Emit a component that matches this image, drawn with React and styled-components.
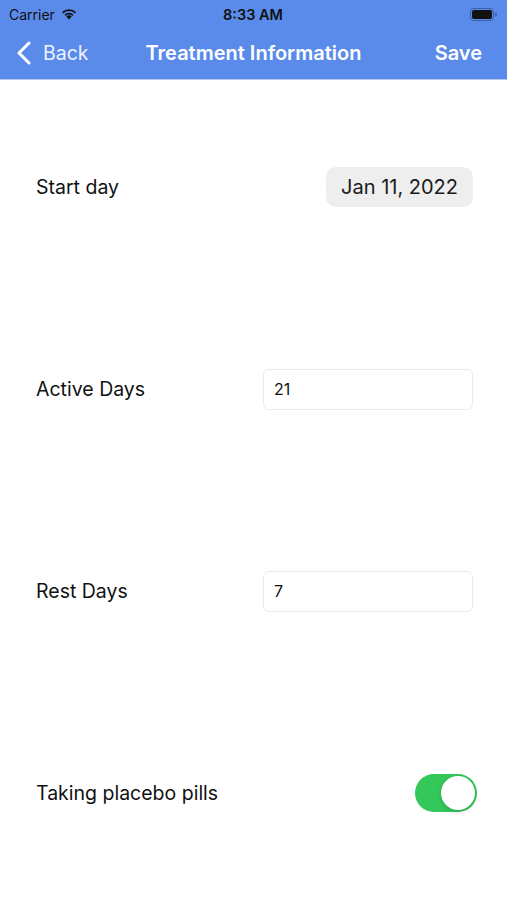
import React from "react";
import styled, { createGlobalStyle } from "styled-components";

const GlobalStyle = createGlobalStyle`
  html, body {
    margin: 0;
    padding: 0;
    background: #ffffff;
    font-family: "Inter", "Liberation Sans", Arial, sans-serif;
  }
`;

const rows = [
  { label: "Start day", kind: "date", value: "Jan 11, 2022" },
  { label: "Active Days", kind: "input", value: "21" },
  { label: "Rest Days", kind: "input", value: "7" },
  { label: "Taking placebo pills", kind: "toggle", value: true },
];

export default function App() {
  return (
    <Page>
      <GlobalStyle />
      <Header>
        <StatusBar>
          <Carrier>
            Carrier
            <svg width="18" height="13" viewBox="0 0 18 13">
              <path
                d="M9 12.5 L6.3 9.6 A3.9 3.9 0 0 1 11.7 9.6 Z"
                fill="#111"
              />
              <path
                d="M4.5 7.7 A6.4 6.4 0 0 1 13.5 7.7 L12.3 8.9 A4.7 4.7 0 0 0 5.7 8.9 Z"
                fill="#111"
              />
              <path
                d="M2 5.1 A10 10 0 0 1 16 5.1 L14.8 6.4 A8.2 8.2 0 0 0 3.2 6.4 Z"
                fill="#111"
              />
            </svg>
          </Carrier>
          <Time>8:33 AM</Time>
          <Battery>
            <svg width="27" height="13" viewBox="0 0 27 13">
              <rect x="0.5" y="0.5" width="23" height="12" rx="3.5" fill="none" stroke="#1f2d4a" strokeOpacity="0.45" />
              <rect x="2" y="2" width="20" height="9" rx="2" fill="#111" />
              <path d="M25 4.5 a1.6 1.6 0 0 1 0 4 Z" fill="#1f2d4a" fillOpacity="0.45" />
            </svg>
          </Battery>
        </StatusBar>
        <NavBar>
          <BackButton>
            <svg width="16" height="24" viewBox="0 0 16 24">
              <path
                d="M13 2 L3 12 L13 22"
                fill="none"
                stroke="#ffffff"
                strokeWidth="3"
                strokeLinecap="round"
                strokeLinejoin="round"
              />
            </svg>
            <span>Back</span>
          </BackButton>
          <Title>Treatment Information</Title>
          <SaveButton>Save</SaveButton>
        </NavBar>
      </Header>
      <Content>
        {rows.map((r) => (
          <Row key={r.label}>
            <Label>{r.label}</Label>
            {r.kind === "date" && <DatePill>{r.value}</DatePill>}
            {r.kind === "input" && <NumberInput defaultValue={r.value} />}
            {r.kind === "toggle" && (
              <Toggle $on={r.value}>
                <Knob />
              </Toggle>
            )}
          </Row>
        ))}
      </Content>
    </Page>
  );
}

const Page = styled.div`
  width: 507px;
  height: 900px;
  background: #ffffff;
  display: flex;
  flex-direction: column;
`;

const Header = styled.div`
  background: #5a8bea;
  height: 79px;
  display: flex;
  flex-direction: column;
  border-bottom: 1px solid #b9c8e3;
`;

const StatusBar = styled.div`
  height: 28px;
  display: grid;
  grid-template-columns: 1fr auto 1fr;
  align-items: center;
  padding: 0 10px 0 9px;
  color: #111;
`;

const Carrier = styled.div`
  display: flex;
  align-items: center;
  gap: 5px;
  font-size: 14px;
  font-family: "Inter", "Liberation Sans", sans-serif;
  svg {
    margin-top: -2px;
  }
`;

const Time = styled.div`
  font-size: 14.5px;
  font-weight: 600;
`;

const Battery = styled.div`
  display: flex;
  justify-content: flex-end;
`;

const NavBar = styled.div`
  flex: 1;
  display: flex;
  align-items: center;
  justify-content: space-between;
  padding: 0 25px 2px 16px;
  color: #ffffff;
  position: relative;
`;

const BackButton = styled.div`
  display: flex;
  align-items: center;
  gap: 11px;
  font-size: 19.5px;
  color: #eef3fd;
`;

const Title = styled.div`
  position: absolute;
  left: 0;
  right: 0;
  text-align: center;
  font-size: 20px;
  font-weight: 600;
  pointer-events: none;
  padding-bottom: 0;
`;

const SaveButton = styled.div`
  font-size: 20px;
  font-weight: 600;
`;

const Content = styled.div`
  display: flex;
  flex-direction: column;
  padding: 6px 34px 0 36px;
`;

const Row = styled.div`
  height: 202px;
  display: flex;
  align-items: center;
  justify-content: space-between;
`;

const Label = styled.div`
  font-size: 19.5px;
  color: #111111;
`;

const DatePill = styled.div`
  background: #eeeeef;
  border-radius: 10px;
  height: 40px;
  padding: 0 15px;
  display: flex;
  align-items: center;
  font-size: 20px;
  color: #1a1a1a;
`;

const NumberInput = styled.input`
  width: 210px;
  height: 41px;
  box-sizing: border-box;
  border: 1px solid #ebebeb;
  border-radius: 6px;
  padding: 0 10px;
  font-size: 16px;
  font-family: "Inter", "Liberation Sans", sans-serif;
  color: #111;
  outline: none;
  background: #fff;
`;

const Toggle = styled.div`
  width: 62px;
  height: 38px;
  margin-right: -4px;
  box-sizing: border-box;
  border-radius: 19px;
  background: ${(p) => (p.$on ? "#34c759" : "#e5e5ea")};
  display: flex;
  align-items: center;
  justify-content: ${(p) => (p.$on ? "flex-end" : "flex-start")};
  padding: 2px;
`;

const Knob = styled.div`
  width: 34px;
  height: 34px;
  border-radius: 50%;
  background: #ffffff;
  box-shadow: 0 2px 4px rgba(0, 0, 0, 0.15);
`;
